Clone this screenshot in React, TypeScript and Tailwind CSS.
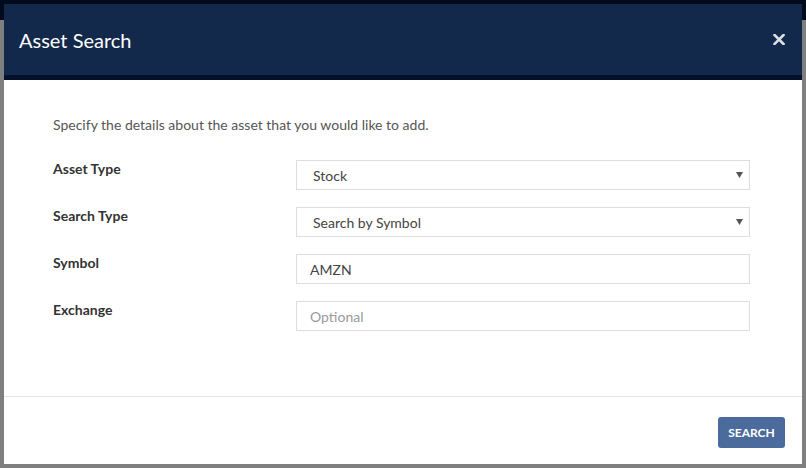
import React from "react";

const font = { fontFamily: '"Lato", "Open Sans", Arial, sans-serif' };

const Caret = () => (
  <svg width="7" height="6" viewBox="0 0 7 6" className="shrink-0">
    <path d="M0 0 L7 0 L3.5 6 Z" fill="#555" />
  </svg>
);

const CloseIcon = () => (
  <svg width="12" height="11" viewBox="0 0 12 11">
    <path d="M1.5 1 L10.5 10 M10.5 1 L1.5 10" stroke="#dcdfe5" strokeWidth="2.6" strokeLinecap="square" />
  </svg>
);

const SelectBox = ({ value }: { value: string }) => (
  <div className="flex h-[30px] w-[454px] items-center justify-between border border-[#dddddd] bg-white pl-[16px] pr-[6px] text-[14px] text-[#444]">
    <span>{value}</span>
    <Caret />
  </div>
);

const TextBox = ({ value, placeholder }: { value?: string; placeholder?: string }) => (
  <input
    readOnly
    value={value ?? ""}
    placeholder={placeholder}
    className="h-[30px] w-[454px] border border-[#dddddd] bg-white px-[13px] text-[14px] text-[#444] outline-none placeholder:text-[#999]"
    style={font}
  />
);

const rows: { label: string; field: React.ReactNode }[] = [
  { label: "Asset Type", field: <SelectBox value="Stock" /> },
  { label: "Search Type", field: <SelectBox value="Search by Symbol" /> },
  { label: "Symbol", field: <TextBox value="AMZN" /> },
  { label: "Exchange", field: <TextBox placeholder="Optional" /> },
];

export default function App() {
  return (
    <div
      className="h-[468px] w-[806px] overflow-hidden bg-[linear-gradient(to_bottom,#020b1c_20px,#7f7f7f_20px)] pl-[4px] pt-[4px]"
      style={font}
    >
      <div className="flex h-[460px] w-[798px] flex-col bg-white">
        <div className="flex h-[76px] shrink-0 items-center justify-between border-b-[5px] border-[#03112b] bg-[#13294b] pl-[15px] pr-[17px]">
          <h1 className="text-[20px] text-white">Asset Search</h1>
          <CloseIcon />
        </div>

        <div className="flex h-[317px] shrink-0 flex-col border-b border-[#e5e5e5] pl-[49px] pt-[35px]">
          <p className="mb-[25px] text-[14px] leading-[20px] text-[#555]">
            Specify the details about the asset that you would like to add.
          </p>
          <div className="flex flex-col gap-[17px]">
            {rows.map((row) => (
              <div key={row.label} className="flex items-start">
                <label className="w-[243px] text-[14px] font-bold leading-[18px] text-[#333]">
                  {row.label}
                </label>
                {row.field}
              </div>
            ))}
          </div>
        </div>

        <div className="flex flex-1 justify-end pr-[17px] pt-[20px]">
          <button className="h-[31px] w-[67px] rounded-[3px] bg-[#4a6b9c] text-[12px] font-bold text-white">
            SEARCH
          </button>
        </div>
      </div>
    </div>
  );
}
